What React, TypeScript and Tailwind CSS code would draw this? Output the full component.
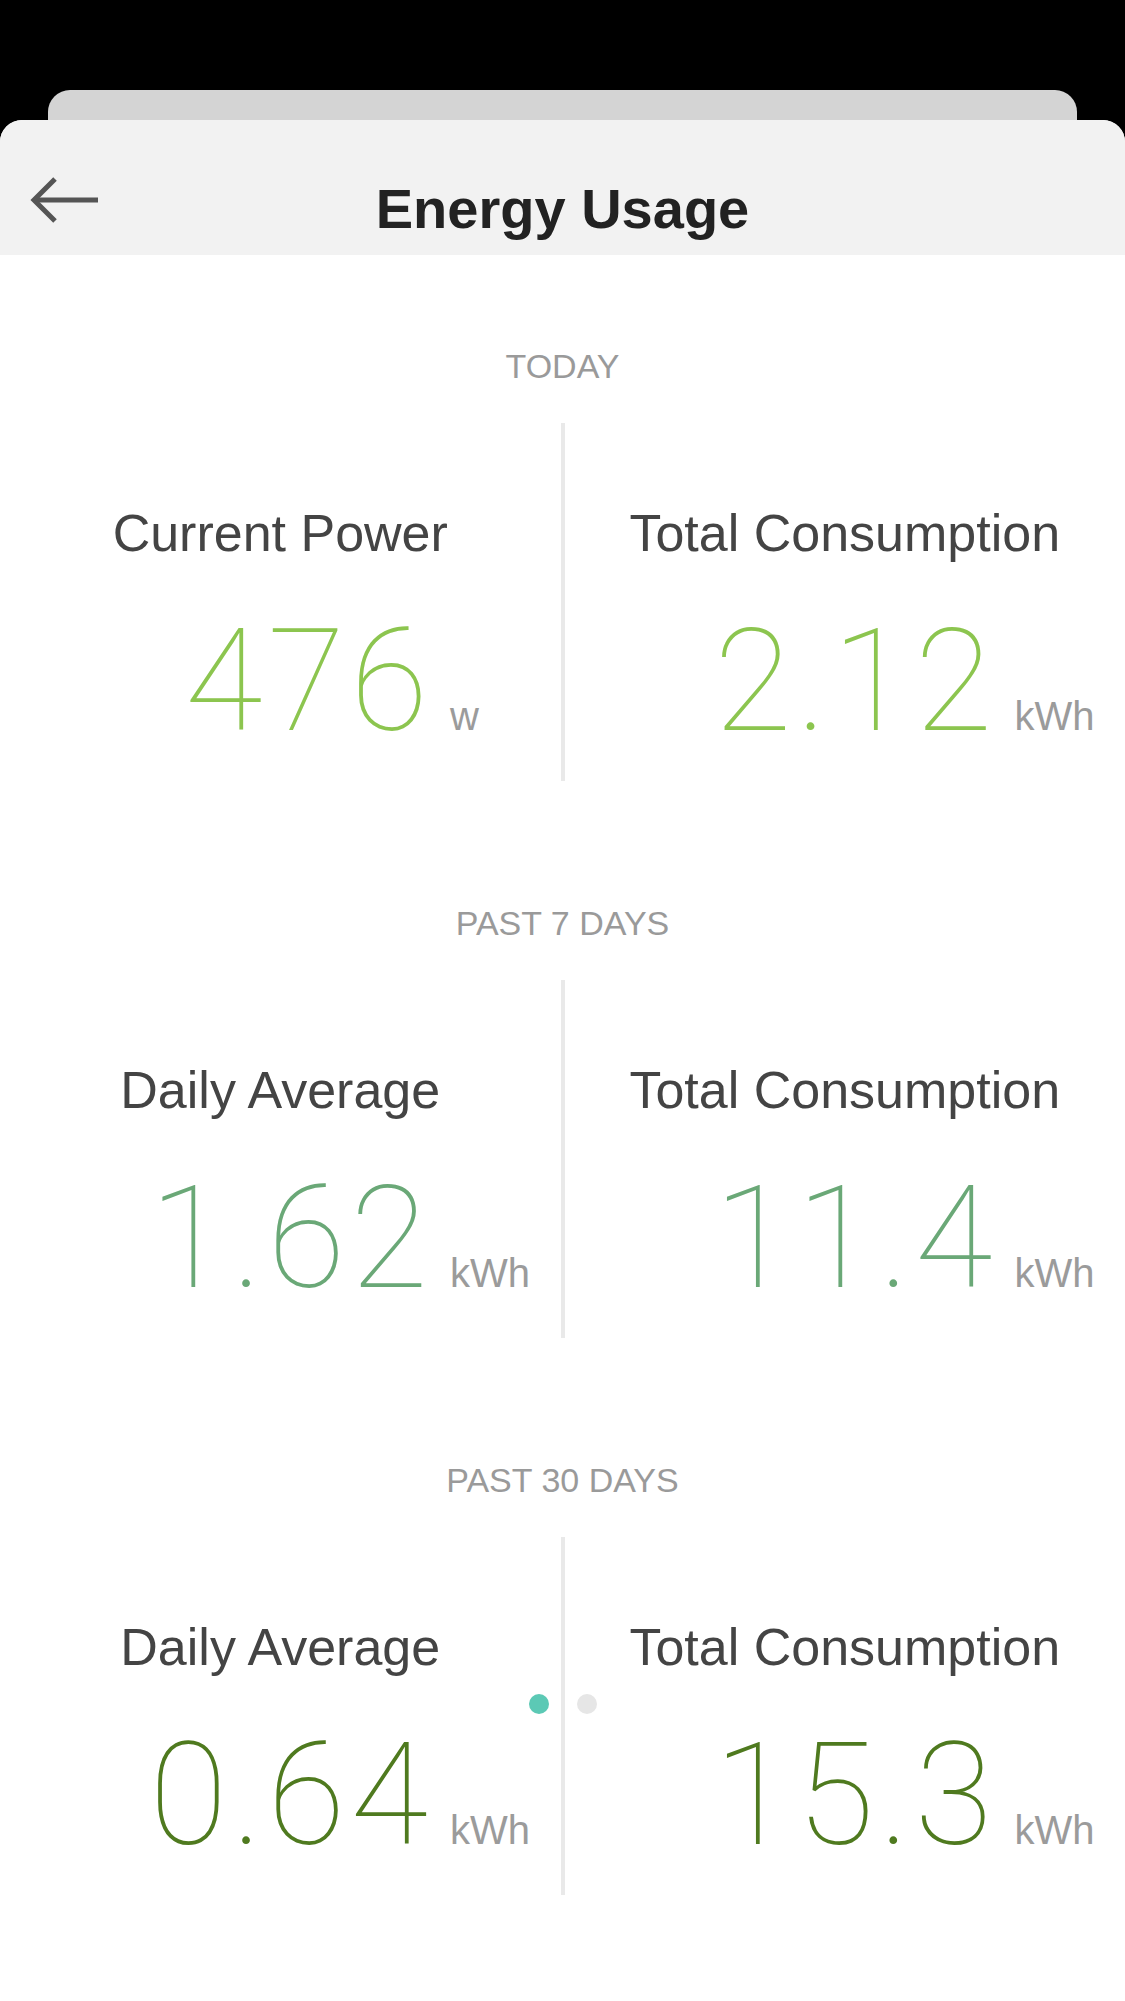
const sections = [
  {
    title: "TODAY",
    color: "text-[#8cc54f]",
    left: { label: "Current Power", value: "476", unit: "w" },
    right: { label: "Total Consumption", value: "2.12", unit: "kWh" },
  },
  {
    title: "PAST 7 DAYS",
    color: "text-[#6aa877]",
    left: { label: "Daily Average", value: "1.62", unit: "kWh" },
    right: { label: "Total Consumption", value: "11.4", unit: "kWh" },
  },
  {
    title: "PAST 30 DAYS",
    color: "text-[#4f7a1f]",
    left: { label: "Daily Average", value: "0.64", unit: "kWh" },
    right: { label: "Total Consumption", value: "15.3", unit: "kWh" },
  },
];

type Stat = { label: string; value: string; unit: string };

const StatCell = ({ stat, color }: { stat: Stat; color: string }) => {
  return (
    <div className="flex flex-col pt-[80px]">
      <p className="text-center text-[52px] leading-[60px] text-[#444444] font-['Liberation_Sans',sans-serif]">
        {stat.label}
      </p>
      <div className="flex items-baseline mt-[49px]">
        <span
          className={`w-[433px] text-right text-[142px] leading-[140px] tracking-[5px] font-thin font-['Roboto',sans-serif] ${color}`}
        >
          {stat.value}
        </span>
        <span className="ml-[17px] text-[40px] leading-[40px] text-[#9b9b9b] font-['Liberation_Sans',sans-serif]">
          {stat.unit}
        </span>
      </div>
    </div>
  );
};

export default function App() {
  return (
    <div className="h-[2001px] bg-black flex flex-col overflow-hidden">
      <div className="mt-[90px] mx-[48px] h-[30px] bg-[#d4d4d4] rounded-t-[22px]" />

      <div className="flex-1 bg-white rounded-t-[22px] overflow-hidden flex flex-col">
        {/* header */}
        <div className="h-[135px] bg-[#f2f2f2] grid grid-cols-[1fr_auto_1fr]">
          <div className="pl-[28px] pt-[55px]">
            <svg width="72" height="50" viewBox="0 0 72 50" fill="none">
              <path d="M6 25 H70" stroke="#555555" strokeWidth="5" />
              <path d="M27 4 L6 25 L27 46" stroke="#555555" strokeWidth="5" />
            </svg>
          </div>
          <h1 className="pt-[61px] text-[56px] leading-[56px] font-bold text-[#222222] font-['Liberation_Sans',sans-serif]">
            Energy Usage
          </h1>
          <div />
        </div>

        {/* body */}
        <div className="pt-[91px] flex flex-col gap-[122px]">
          {sections.map((s, i) => (
            <section key={s.title}>
              <p className="text-center text-[34px] leading-[40px] text-[#9a9a9a] font-['Liberation_Sans',sans-serif]">
                {s.title}
              </p>
              <div className="relative mt-[37px] h-[358px] grid grid-cols-[1fr_4px_1fr]">
                <StatCell stat={s.left} color={s.color} />
                <div className="bg-[#e9e9e9]" />
                <StatCell stat={s.right} color={s.color} />
                {i === 2 && (
                  <div className="absolute left-[529px] top-[157px] flex gap-[28px]">
                    <span className="w-[20px] h-[20px] rounded-full bg-[#5cc9b5]" />
                    <span className="w-[20px] h-[20px] rounded-full bg-[#e6e6e6]" />
                  </div>
                )}
              </div>
            </section>
          ))}
        </div>
      </div>
    </div>
  );
}
